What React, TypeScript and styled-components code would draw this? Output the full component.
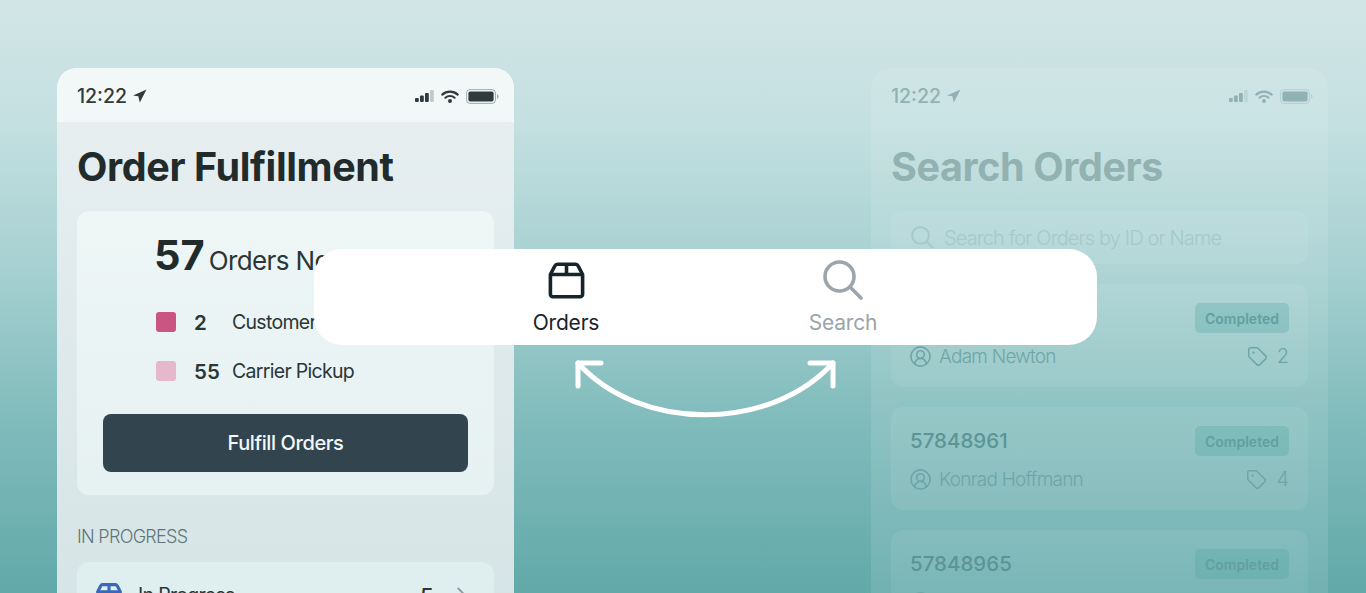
import styled, { createGlobalStyle } from "styled-components";
import { CircleUserRound, Tag, ChevronRight } from "lucide-react";

const GlobalStyle = createGlobalStyle`
  html, body {
    margin: 0;
    padding: 0;
    background: #62a9aa;
    font-family: "Inter", "Liberation Sans", sans-serif;
  }
`;

const Page = styled.div`
  position: relative;
  width: 1366px;
  height: 593px;
  overflow: hidden;
  box-sizing: border-box;
  padding: 68px 38px 0 57px;
  display: flex;
  justify-content: space-between;
  align-items: flex-start;
  background: linear-gradient(180deg, #d1e5e6 0%, #c5e0e1 20%, #a9d2d3 43%, #82bcbc 70%, #62a9aa 100%);
`;

const Phone = styled.div<{ $faded?: boolean }>`
  width: 457px;
  height: 560px;
  flex-shrink: 0;
  border-radius: 20px 20px 0 0;
  overflow: hidden;
  display: flex;
  flex-direction: column;
  background: ${(props) =>
    props.$faded
      ? "rgba(255, 255, 255, 0.1)"
      : "linear-gradient(180deg, #e8eff1 0%, #d5e4e6 100%)"};
`;

const StatusBar = styled.div<{ $faded?: boolean }>`
  height: 54px;
  flex-shrink: 0;
  box-sizing: border-box;
  padding: 2px 15px 0 20px;
  display: flex;
  align-items: center;
  justify-content: space-between;
  background: ${(props) => (props.$faded ? "transparent" : "#f2f8f8")};
  color: ${(props) => (props.$faded ? "#90b2b4" : "#2f3b3e")};
`;

const Clock = styled.div`
  display: flex;
  align-items: center;
  gap: 5px;
  font-size: 19.5px;
  font-weight: 500;
`;

const StatusIcons = styled.div`
  display: flex;
  align-items: center;
  gap: 7px;
`;

const Content = styled.div`
  padding: 21px 20px 0;
  display: flex;
  flex-direction: column;
`;

const Title = styled.h1<{ $faded?: boolean }>`
  margin: 0 0 21px;
  font-size: 39.5px;
  line-height: 48px;
  font-weight: 700;
  letter-spacing: -0.4px;
  height: 47px;
  color: ${(props) => (props.$faded ? "#92b2b2" : "#212b2c")};
`;

const SummaryCard = styled.div`
  height: 284px;
  box-sizing: border-box;
  padding: 19px 26px 0;
  border-radius: 12px;
  background: linear-gradient(180deg, #eef6f6 0%, #e6f1f1 100%);
  display: flex;
  flex-direction: column;
`;

const Headline = styled.div`
  margin-left: 51px;
  height: 48px;
  display: flex;
  align-items: baseline;
  gap: 4px;
  color: #2a3638;
  font-size: 26px;
  letter-spacing: -0.6px;
  white-space: nowrap;
`;

const HeadlineCount = styled.span`
  font-size: 41.5px;
  font-weight: 700;
  letter-spacing: 0;
  color: #212b2c;
`;

const Legend = styled.div`
  margin: 34px 0 0 53px;
  display: flex;
  flex-direction: column;
  gap: 29px;
`;

const LegendRow = styled.div`
  height: 20px;
  display: flex;
  align-items: center;
  color: #2a3638;
  font-size: 19.5px;
  letter-spacing: -0.7px;
  white-space: nowrap;
`;

const Swatch = styled.span<{ $color: string }>`
  width: 20px;
  height: 20px;
  border-radius: 3px;
  margin-right: 18px;
  background: ${(props) => props.$color};
`;

const LegendCount = styled.span`
  width: 38px;
  font-weight: 600;
  font-size: 20.5px;
  letter-spacing: 0;
`;

const FulfillButton = styled.button`
  margin-top: 33px;
  height: 58px;
  border: 0;
  border-radius: 8px;
  background: #32454f;
  color: #f4f8f8;
  font-family: inherit;
  font-size: 20px;
  font-weight: 500;
  letter-spacing: -0.4px;
`;

const SectionLabel = styled.div`
  margin: 31px 0 14px;
  height: 22px;
  line-height: 22px;
  font-size: 18px;
  font-weight: 300;
  letter-spacing: -0.7px;
  color: #5f7679;
`;

const ProgressRow = styled.div`
  height: 60px;
  box-sizing: border-box;
  padding: 21px 22px 0 19px;
  border-radius: 12px;
  background: #dfeeee;
  display: flex;
  align-items: flex-start;
  font-size: 19.5px;
  letter-spacing: -0.7px;
  color: #2a3638;
`;

const ProgressName = styled.span`
  flex: 1;
  margin-left: 16px;
`;

const ProgressCount = styled.span`
  margin-right: 17px;
  font-size: 22px;
  font-weight: 500;
`;

const SearchBox = styled.div`
  height: 53px;
  box-sizing: border-box;
  padding: 0 20px;
  border-radius: 10px;
  background: rgba(255, 255, 255, 0.07);
  display: flex;
  align-items: center;
  gap: 10px;
  color: #a6cacb;
  font-size: 20px;
  font-weight: 300;
  letter-spacing: -0.87px;
`;

const OrderList = styled.div`
  margin-top: 20px;
  display: flex;
  flex-direction: column;
  gap: 20px;
`;

const OrderCard = styled.div`
  height: 103px;
  flex-shrink: 0;
  box-sizing: border-box;
  padding: 19px 19px 0;
  border-radius: 12px;
  background: rgba(255, 255, 255, 0.07);
  display: flex;
  flex-direction: column;
  gap: 8px;
`;

const OrderTop = styled.div`
  height: 30px;
  display: flex;
  align-items: center;
  justify-content: space-between;
`;

const OrderId = styled.span`
  margin-bottom: 2px;
  font-size: 20.5px;
  font-weight: 500;
  color: #5c9495;
`;

const Badge = styled.span`
  width: 94px;
  height: 30px;
  border-radius: 5px;
  background: rgba(76, 164, 160, 0.3);
  color: #639f9f;
  display: flex;
  align-items: center;
  justify-content: center;
  font-size: 14px;
  font-weight: 600;
`;

const OrderBottom = styled.div`
  height: 30px;
  margin-left: -1px;
  display: flex;
  align-items: center;
  color: #6ea6a7;
  font-size: 19px;
  font-weight: 300;
  letter-spacing: -0.75px;
`;

const Customer = styled.span`
  flex: 1;
  margin-left: 7px;
`;

const ItemCount = styled.span`
  margin-left: 9px;
  font-size: 20px;
  letter-spacing: 0;
`;

const TabPill = styled.div`
  position: absolute;
  left: 314px;
  top: 249px;
  width: 783px;
  height: 96px;
  box-sizing: border-box;
  padding-right: 2px;
  border-radius: 28px;
  background: #ffffff;
  display: grid;
  grid-template-columns: 277px 277px;
  justify-content: center;
`;

const TabItem = styled.div<{ $active?: boolean }>`
  display: flex;
  flex-direction: column;
  align-items: center;
  padding-top: 11px;
  font-size: 21px;
  line-height: 26px;
  letter-spacing: -0.2px;
  color: ${(props) => (props.$active ? "#18242b" : "#9ba5ab")};
`;

const TabIcon = styled.div`
  height: 40px;
  margin-bottom: 10px;
  display: flex;
  align-items: center;
`;

const SwapArrow = styled.svg`
  position: absolute;
  left: 570px;
  top: 355px;
`;

function Signal() {
  return (
    <svg width="19" height="12" viewBox="0 0 19 12" fill="currentColor">
      <rect x="0" y="8" width="3.800" height="4" rx="1" />
      <rect x="5" y="5.500" width="3.800" height="6.500" rx="1" />
      <rect x="10" y="3" width="3.800" height="9" rx="1" />
      <rect x="15" y="0" width="3.800" height="12" rx="1" opacity="0.25" />
    </svg>
  );
}

function Wifi() {
  return (
    <svg width="18" height="13" viewBox="0 0 18 13" fill="none" stroke="currentColor" strokeWidth="2.200" strokeLinecap="round">
      <path d="M1.300 4.600C5.600.600 12.400.600 16.700 4.600" />
      <path d="M4.400 7.700C7 5.400 11 5.400 13.600 7.700" />
      <circle cx="9" cy="11" r="0.900" fill="currentColor" />
    </svg>
  );
}

function Battery() {
  return (
    <svg width="33" height="15" viewBox="0 0 33 15" fill="none">
      <rect x="0.600" y="0.600" width="28.800" height="13.800" rx="3.400" stroke="currentColor" strokeOpacity="0.4" />
      <rect x="2.400" y="2.400" width="25.200" height="10.200" rx="1.800" fill="currentColor" />
      <path d="M31 5v5c.9-.4 1.600-1.400 1.600-2.500S31.900 5.400 31 5z" fill="currentColor" fillOpacity="0.4" />
    </svg>
  );
}

function LocationArrow() {
  return (
    <svg width="15" height="15" viewBox="0 0 15 15" fill="currentColor">
      <path d="M14.500.500 1 6.600 6.300 7.300 7.800 13.500z" />
    </svg>
  );
}

function PackageIcon({ size, color, weight = 3.2 }: { size: number; color: string; weight?: number }) {
  return (
    <svg width={size} height={size} viewBox="0 0 37 37" fill="none" stroke={color} strokeWidth={weight} strokeLinejoin="round">
      <path d="M2.400 12.500 6.800 4a3 3 0 0 1 2.700-1.700h18a3 3 0 0 1 2.700 1.700l4.400 8.500v19.800a2.500 2.500 0 0 1-2.500 2.500H4.900a2.500 2.500 0 0 1-2.500-2.500z" />
      <path d="M2.400 12.500h32.200M18.500 2.300v10.200" />
    </svg>
  );
}

function SearchGlyph({ size, color }: { size: number; color: string }) {
  return (
    <svg width={size} height={size} viewBox="0 0 40 40" fill="none" stroke={color} strokeWidth="3.600" strokeLinecap="round">
      <circle cx="16.500" cy="16.500" r="14.500" />
      <path d="M27.500 27.500 38 38" />
    </svg>
  );
}

const orders = [
  { id: "57848957", customer: "Adam Newton", items: 2 },
  { id: "57848961", customer: "Konrad Hoffmann", items: 4 },
  { id: "57848965", customer: "Julia Becker", items: 3 },
];

export default function App() {
  return (
    <Page>
      <GlobalStyle />

      <Phone>
        <StatusBar>
          <Clock>
            12:22
            <LocationArrow />
          </Clock>
          <StatusIcons>
            <Signal />
            <Wifi />
            <Battery />
          </StatusIcons>
        </StatusBar>
        <Content>
          <Title>Order Fulfillment</Title>
          <SummaryCard>
            <Headline>
              <HeadlineCount>57</HeadlineCount>
              Orders Not Picked
            </Headline>
            <Legend>
              <LegendRow>
                <Swatch $color="#c95583" />
                <LegendCount>2</LegendCount>
                Customer Pickup
              </LegendRow>
              <LegendRow>
                <Swatch $color="#e6b8cc" />
                <LegendCount>55</LegendCount>
                Carrier Pickup
              </LegendRow>
            </Legend>
            <FulfillButton>Fulfill Orders</FulfillButton>
          </SummaryCard>
          <SectionLabel>IN PROGRESS</SectionLabel>
          <ProgressRow>
            <PackageIcon size={26} color="#3a68b8" weight={4.400} />
            <ProgressName>In Progress</ProgressName>
            <ProgressCount>5</ProgressCount>
            <ChevronRight size={22} color="#8a9ea1" />
          </ProgressRow>
        </Content>
      </Phone>

      <Phone $faded>
        <StatusBar $faded>
          <Clock>
            12:22
            <LocationArrow />
          </Clock>
          <StatusIcons>
            <Signal />
            <Wifi />
            <Battery />
          </StatusIcons>
        </StatusBar>
        <Content>
          <Title $faded>Search Orders</Title>
          <SearchBox>
            <SearchGlyph size={23} color="#a6cacb" />
            Search for Orders by ID or Name
          </SearchBox>
          <OrderList>
            {orders.map((order) => (
              <OrderCard key={order.id}>
                <OrderTop>
                  <OrderId>{order.id}</OrderId>
                  <Badge>Completed</Badge>
                </OrderTop>
                <OrderBottom>
                  <CircleUserRound size={23} strokeWidth={1.700} />
                  <Customer>{order.customer}</Customer>
                  <Tag size={21} strokeWidth={1.700} />
                  <ItemCount>{order.items}</ItemCount>
                </OrderBottom>
              </OrderCard>
            ))}
          </OrderList>
        </Content>
      </Phone>

      <TabPill>
        <TabItem $active>
          <TabIcon>
            <PackageIcon size={37} color="#18242b" weight={3.600} />
          </TabIcon>
          Orders
        </TabItem>
        <TabItem>
          <TabIcon>
            <SearchGlyph size={40} color="#9ba5ab" />
          </TabIcon>
          Search
        </TabItem>
      </TabPill>

      <SwapArrow width="270" height="70" viewBox="0 0 270 70" fill="none" stroke="#ffffff" strokeWidth="5" strokeLinecap="round" strokeLinejoin="round">
        <path d="M8 8C70 77 200 77 263 8" />
        <path d="M8 31V8h23M240 8h23v23" />
      </SwapArrow>
    </Page>
  );
}
